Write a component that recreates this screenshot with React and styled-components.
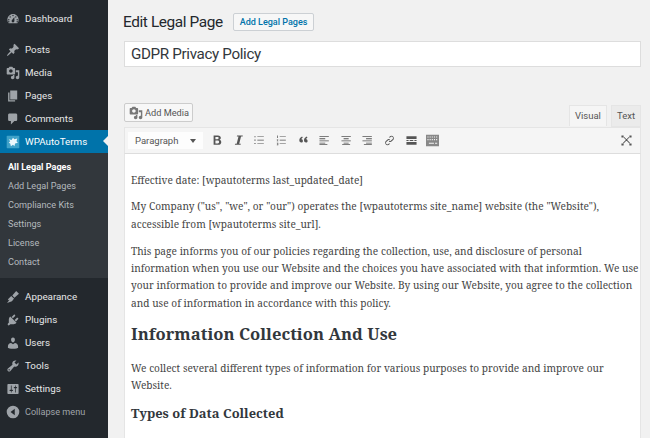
import React from 'react';
import styled, { createGlobalStyle } from 'styled-components';

const sans = 'Roboto, "Liberation Sans", sans-serif';

const Global = createGlobalStyle`
  html, body { margin: 0; padding: 0; background: #f1f1f1; }
  body { width: 650px; height: 438px; overflow: hidden; font-family: ${sans}; }
`;

const Shell = styled.div`
  display: flex;
  width: 650px;
  height: 438px;
  overflow: hidden;
`;

const Sidebar = styled.nav`
  width: 108px;
  flex: none;
  background: #23282d;
  padding-top: 7px;
`;

const MenuItem = styled.div`
  position: relative;
  display: flex;
  align-items: center;
  height: 23px;
  padding-left: 6px;
  gap: 5px;
  font-size: 9.8px;
  color: ${(p) => (p.$active ? '#fff' : '#e6e7e8')};
  background: ${(p) => (p.$active ? '#0073aa' : 'transparent')};
  margin-top: ${(p) => p.$gap || 0}px;
`;

const MenuIcon = styled.svg`
  width: 14px;
  height: 14px;
  flex: none;
  fill: ${(p) => p.$tint || '#9ea3a8'};
`;

const Arrow = styled.span`
  position: absolute;
  right: 0;
  top: 6px;
  border: 5px solid transparent;
  border-right-color: #f1f1f1;
  border-left: 0;
`;

const SubMenu = styled.div`
  background: #32373c;
  padding: 5px 0 6px;
  margin-bottom: 7px;
`;

const SubItem = styled.div`
  height: 19px;
  line-height: 19px;
  padding-left: 8px;
  font-size: 9.1px;
  font-weight: ${(p) => (p.$current ? 700 : 400)};
  color: ${(p) => (p.$current ? '#fff' : '#b4b9be')};
`;

const Collapse = styled(MenuItem)`
  color: #a0a5aa;
  font-size: 9.1px;
`;

const Main = styled.main`
  flex: 1;
  min-width: 0;
  padding: 0 9px 0 16px;
`;

const HeadingRow = styled.div`
  display: flex;
  align-items: center;
  gap: 10px;
  height: 41px;
  padding-top: 3px;
  margin-left: -1px;
  box-sizing: border-box;
`;

const Heading = styled.h1`
  margin: 0;
  font-size: 15.4px;
  letter-spacing: -0.4px;
  font-weight: 400;
  color: #23282d;
`;

const AddNew = styled.button`
  height: 18px;
  padding: 0 6px;
  border: 1px solid #ccd0d4;
  border-radius: 2px;
  background: #f7f7f7;
  color: #0073aa;
  font: 500 9px ${sans};
`;

const TitleInput = styled.div`
  height: 24px;
  line-height: 24px;
  border: 1px solid #ddd;
  background: #fff;
  padding-left: 6px;
  font-size: 15.2px;
  letter-spacing: -0.35px;
  color: #32373c;
`;

const EditorTop = styled.div`
  display: flex;
  align-items: flex-end;
  justify-content: space-between;
  margin-top: 35px;
  height: 25px;
`;

const MediaButton = styled.button`
  display: flex;
  align-items: center;
  gap: 2px;
  height: 19px;
  margin-bottom: 5px;
  padding: 0 3px 0 4px;
  border: 1px solid #ccc;
  border-radius: 2px;
  background: #f7f7f7;
  color: #555;
  font: 9.2px ${sans};
`;

const Tabs = styled.div`
  display: flex;
  gap: 4px;
`;

const Tab = styled.div`
  height: 20px;
  line-height: 20px;
  padding: 0 5px;
  font-size: 9.5px;
  color: #555;
  background: ${(p) => (p.$on ? '#f5f5f5' : '#ebebeb')};
  border: 1px solid #e5e5e5;
  border-bottom: ${(p) => (p.$on ? 'none' : '1px solid #e5e5e5')};
`;

const Toolbar = styled.div`
  display: flex;
  align-items: center;
  height: 25px;
  padding: 0 3px;
  background: #f5f5f5;
  border: 1px solid #e5e5e5;
  border-bottom: 1px solid #ddd;
`;

const Format = styled.div`
  display: flex;
  align-items: center;
  justify-content: space-between;
  width: 75px;
  height: 17px;
  padding: 0 7px;
  box-sizing: border-box;
  background: #fdfdfd;
  font-size: 9.5px;
  color: #555;
  margin-right: 3px;
`;

const Caret = styled.span`
  border: 3px solid transparent;
  border-top: 4px solid #555;
  border-bottom: 0;
`;

const ToolButton = styled.span`
  display: flex;
  align-items: center;
  justify-content: center;
  width: 21.6px;
`;

const ToolIcon = styled.svg`
  width: 13px;
  height: 13px;
  fill: ${(p) => p.$tint || '#555'};
`;

const Spacer = styled.div`
  flex: 1;
`;

const Content = styled.article`
  height: 300px;
  overflow: hidden;
  box-sizing: border-box;
  border-left: 1px solid #e5e5e5;
  border-right: 1px solid #e5e5e5;
  background: #fff;
  padding: 17.5px 1px 0 6px;
  font-family: "Noto Serif", "Liberation Serif", serif;
  font-size: 10.1px;
  word-spacing: 0.15px;
  line-height: 17.3px;
  color: #444;
`;

const Para = styled.p`
  margin: 0 0 9.7px;
`;

const H2 = styled.h2`
  margin: 9.5px 0 14px;
  font-size: 16.6px;
  line-height: 24px;
  font-weight: 700;
  color: #32373c;
`;

const H3 = styled.h3`
  margin: 9px 0 0;
  font-size: 12.9px;
  line-height: 18px;
  font-weight: 700;
  color: #32373c;
`;

const menuPaths = {
  dashboard: 'M3.76 16h12.48c1.1-1.37 1.76-3.11 1.76-5 0-4.42-3.58-8-8-8s-8 3.58-8 8c0 1.89.66 3.63 1.76 5zM10 4c.55 0 1 .45 1 1s-.45 1-1 1-1-.45-1-1 .45-1 1-1zM6 6c.55 0 1 .45 1 1s-.45 1-1 1-1-.45-1-1 .45-1 1-1zm8 0c.55 0 1 .45 1 1s-.45 1-1 1-1-.45-1-1 .45-1 1-1zm-5.37 5.55L12 7v6c0 1.1-.9 2-2 2s-2-.9-2-2c0-.57.24-1.08.63-1.45zM4 10c.55 0 1 .45 1 1s-.45 1-1 1-1-.45-1-1 .45-1 1-1zm12 0c.55 0 1 .45 1 1s-.45 1-1 1-1-.45-1-1 .45-1 1-1zm-12 3c.55 0 1 .45 1 1s-.45 1-1 1-1-.45-1-1 .45-1 1-1zm12 0c.55 0 1 .45 1 1s-.45 1-1 1-1-.45-1-1 .45-1 1-1z',
  posts: 'M10.44 3.02l1.82-1.82 6.36 6.35-1.83 1.82c-1.05-.68-2.48-.57-3.41.36l-.75.75c-.92.93-1.04 2.35-.35 3.41l-1.83 1.82-2.41-2.41-2.8 2.79c-.42.42-3.38 2.71-3.8 2.29s1.86-3.39 2.28-3.81l2.79-2.79L4.1 9.36l1.83-1.82c1.05.69 2.48.57 3.4-.36l.75-.75c.93-.92 1.05-2.35.36-3.41z',
  media: 'M13 11V4c0-.55-.45-1-1-1h-1.67L9 1H5L3.67 3H2c-.55 0-1 .45-1 1v7c0 .55.45 1 1 1h10c.55 0 1-.45 1-1zM7 4.5c1.38 0 2.5 1.12 2.5 2.5S8.38 9.5 7 9.5 4.5 8.38 4.5 7 5.62 4.5 7 4.5zM14 6h5v10.5c0 1.38-1.12 2.5-2.5 2.5S14 17.88 14 16.5s1.12-2.5 2.5-2.5c.17 0 .34.02.5.05V9h-3V6zm-4 8.05V13h2v3.5c0 1.38-1.12 2.5-2.5 2.5S7 17.88 7 16.5 8.12 14 9.5 14c.17 0 .34.02.5.05z',
  pages: 'M6 15V2h10v13H6zm-1 1h8v2H3V5h2v11z',
  comments: 'M5 2h9c1.1 0 2 .9 2 2v7c0 1.1-.9 2-2 2h-2l-5 5v-5H5c-1.1 0-2-.9-2-2V4c0-1.1.9-2 2-2z',
  appearance: 'M14.5 1.5l4 4-6.500 5.500-3-3zM7.500 8.500l4 4-1.500 1.500c-.5 1-1 2-2.500 2.500L1.500 18.500l3.500-4.500-2.500.5c.5-1.500 1.500-2.500 2.500-3.500z',
  plugins: 'M13.11 4.36L9.87 7.6 8 5.73l3.24-3.24c.35-.34 1.05-.2 1.56.32.52.51.66 1.21.31 1.55zm-8 1.77l.91-1.12 9.01 9.01-1.19.84c-.71.71-2.58 1.16-3.82 1.16H6.14L4.9 17.26c-.59.59-1.54.59-2.12 0-.59-.58-.59-1.53 0-2.12l1.24-1.24v-3.88c0-1.13.4-3.05 1.09-3.89zm7.26 3.97l3.24-3.24c.34-.35 1.04-.21 1.55.31.52.51.66 1.21.31 1.55l-3.24 3.25z',
  users: 'M10 9.25c-2.27 0-2.73-3.44-2.73-3.44C7 4.02 7.82 2 9.97 2c2.16 0 2.98 2.02 2.71 3.81 0 0-.41 3.44-2.68 3.44zm0 2.57L12.72 10c2.39 0 4.52 2.33 4.52 4.53v2.49s-3.65 1.13-7.24 1.13c-3.65 0-7.24-1.13-7.24-1.13v-2.49c0-2.25 1.94-4.48 4.47-4.48z',
  tools: 'M16.68 9.77c-1.34 1.34-3.3 1.67-4.95.99l-5.41 6.52c-.99.99-2.59.99-3.58 0s-.99-2.59 0-3.57l6.52-5.42c-.68-1.65-.35-3.61.99-4.95 1.28-1.28 3.12-1.62 4.72-1.06l-2.89 2.89 2.82 2.82 2.86-2.87c.53 1.58.18 3.41-1.08 4.67zM3.81 16.21c.4.39 1.04.39 1.43 0 .4-.4.4-1.04 0-1.43-.39-.4-1.03-.4-1.43 0-.39.39-.39 1.03 0 1.43z',
  settings: 'M18 16V4c0-.55-.45-1-1-1H3c-.55 0-1 .45-1 1v12c0 .55.45 1 1 1h14c.55 0 1-.45 1-1zM8 11h1c.55 0 1 .45 1 1s-.45 1-1 1H8v1.5c0 .28-.22.5-.5.5s-.5-.22-.5-.5V13H6c-.55 0-1-.45-1-1s.45-1 1-1h1V5.5c0-.28.22-.5.5-.5s.5.22.5.5V11zm5-2h-1c-.55 0-1-.45-1-1s.45-1 1-1h1V5.5c0-.28.22-.5.5-.5s.5.22.5.5V7h1c.55 0 1 .45 1 1s-.45 1-1 1h-1v5.5c0 .28-.22.5-.5.5s-.5-.22-.5-.5V9z',
  collapse: 'M10 1a9 9 0 1 1 0 18 9 9 0 0 1 0-18zm2.500 4.500L6.500 10l6 4.500z',
};

const toolPaths = {
  bold: 'M5 2h6c2.500 0 4 1.300 4 3.300 0 1.400-.8 2.400-2 2.800 1.600.3 2.600 1.500 2.600 3.200 0 2.300-1.700 3.700-4.400 3.700H5zm2.500 2v3.100h2.900c1 0 1.600-.6 1.600-1.600S11.400 4 10.400 4zm0 5v4h3.200c1.200 0 1.900-.8 1.900-2s-.7-2-1.900-2z',
  italic: 'M7 2h8l-.3 1.500H12.500L10 13.500h2.200L11.900 15H4l.3-1.500h2.200L9 3.500H6.700z',
  ul: 'M2 3h1.500v1.500H2zM6 3.300h9v.9H6zM2 7.700h1.500v1.500H2zM6 8h9v.9H6zM2 12.400h1.500v1.500H2zM6 12.700h9v.9H6z',
  ol: 'M3 2h1v3.500H3zM2.500 7.500h2v.8l-1.200 1h1.200v.7h-2v-.8l1.200-1H2.500zM2.500 12h2v3.500h-2v-.7h1.200v-.7h-1v-.6h1v-.7H2.500zM6.500 3.300h8.500v.9H6.500zM6.500 8h8.500v.9H6.500zM6.500 12.700h8.500v.9H6.500z',
  quote: 'M7 3.500l1 1.300C6.700 5.700 6 6.500 6 7.300c.9 0 2.200.6 2.200 2.300 0 1.300-1 2.200-2.200 2.200-1.500 0-2.800-1.100-2.800-3.100 0-2.300 1.600-4 3.800-5.200zm6.500 0l1 1.300c-1.300.9-2 1.700-2 2.500.9 0 2.200.6 2.200 2.300 0 1.300-1 2.200-2.200 2.200-1.500 0-2.800-1.100-2.800-3.100 0-2.300 1.600-4 3.800-5.200z',
  alignLeft: 'M2 3h13v1.200H2zM2 6h8v1.200H2zM2 9h13v1.200H2zM2 12h8v1.200H2zM2 14.300h11v1H2z',
  alignCenter: 'M2 3h13v1.200H2zM5 6h7v1.200H5zM2 9h13v1.200H2zM5 12h7v1.200H5zM3 14.300h11v1H3z',
  alignRight: 'M2 3h13v1.200H2zM7 6h8v1.200H7zM2 9h13v1.200H2zM7 12h8v1.200H7zM4 14.300h11v1H4z',
  link: 'M11.500 2.500a3.500 3.500 0 0 1 3 5.300l-2 2a3.500 3.500 0 0 1-4.500.5l1-1a2 2 0 0 0 2.500-.5l2-2a2 2 0 0 0-2.800-2.800l-1 1a4.500 4.500 0 0 0-1.700-.1l1.700-1.700a3.500 3.500 0 0 1 1.800-.7zM6.500 15.500a3.500 3.500 0 0 1-3-5.300l2-2a3.500 3.500 0 0 1 4.500-.5l-1 1a2 2 0 0 0-2.500.5l-2 2a2 2 0 0 0 2.800 2.800l1-1a4.500 4.500 0 0 0 1.700.1l-1.700 1.700a3.500 3.500 0 0 1-1.800.7z',
  more: 'M2 3h14v4H2zM2 8.200h3v1.500H2zM6.500 8.200h5v1.500h-5zM13 8.200h3v1.500h-3zM2 11h14v4H2z',
  keyboard: 'M0 1h18v16H0zM2 3.500v1.500h1.500V3.500zM5 3.500v1.500h1.500V3.500zM8 3.500v1.500h1.500V3.500zM11 3.500v1.500h1.500V3.500zM14 3.500v1.500h1.500V3.500zM2 7v1.500h1.500V7zM5 7v1.500h1.500V7zM8 7v1.500h1.500V7zM11 7v1.500h1.500V7zM14 7v1.500h1.500V7zM4 12v1.500h7V12zM12.500 12v1.500h3V12z',
  fullscreen: 'M2 2h3v3H2zM13 2h3v3h-3zM2 13h3v3H2zM13 13h3v3h-3zM5 5l8 8 .8-.8-8-8zM13 5l-8 8-.8-.8 8-8z',
};

const Icon = ({ name, tint }) => (
  <MenuIcon viewBox="0 0 20 20" aria-hidden="true" $tint={tint}>
    <path fillRule="evenodd" d={menuPaths[name]} />
  </MenuIcon>
);

const TermsLogo = () => (
  <MenuIcon viewBox="0 0 20 20" aria-hidden="true" $tint="#3fa2c9">
    <rect x="1" y="1" width="18" height="18" rx="1" />
    <path fill="#eef8fc" d="M4 6l4 1 2-3 2 2 4-1-1 4 2 2-4 1-1 4-2-2-3 2-1-4-2-1 2-2z" />
  </MenuIcon>
);

const Tool = ({ name, tint }) => (
  <ToolButton>
    <ToolIcon viewBox="0 0 18 18" aria-hidden="true" $tint={tint}>
      <path fillRule="evenodd" d={toolPaths[name]} />
    </ToolIcon>
  </ToolButton>
);

const App = () => (
  <Shell>
    <Global />
    <Sidebar>
      <MenuItem><Icon name="dashboard" />Dashboard</MenuItem>
      <MenuItem $gap={8}><Icon name="posts" />Posts</MenuItem>
      <MenuItem><Icon name="media" />Media</MenuItem>
      <MenuItem><Icon name="pages" />Pages</MenuItem>
      <MenuItem><Icon name="comments" />Comments</MenuItem>
      <MenuItem $active><TermsLogo />WPAutoTerms<Arrow /></MenuItem>
      <SubMenu>
        <SubItem $current>All Legal Pages</SubItem>
        <SubItem>Add Legal Pages</SubItem>
        <SubItem>Compliance Kits</SubItem>
        <SubItem>Settings</SubItem>
        <SubItem>License</SubItem>
        <SubItem>Contact</SubItem>
      </SubMenu>
      <MenuItem><Icon name="appearance" />Appearance</MenuItem>
      <MenuItem><Icon name="plugins" />Plugins</MenuItem>
      <MenuItem><Icon name="users" />Users</MenuItem>
      <MenuItem><Icon name="tools" />Tools</MenuItem>
      <MenuItem><Icon name="settings" />Settings</MenuItem>
      <Collapse><Icon name="collapse" />Collapse menu</Collapse>
    </Sidebar>
    <Main>
      <HeadingRow>
        <Heading>Edit Legal Page</Heading>
        <AddNew>Add Legal Pages</AddNew>
      </HeadingRow>
      <TitleInput>GDPR Privacy Policy</TitleInput>
      <EditorTop>
        <MediaButton><Icon name="media" tint="#777" />Add Media</MediaButton>
        <Tabs>
          <Tab $on>Visual</Tab>
          <Tab>Text</Tab>
        </Tabs>
      </EditorTop>
      <Toolbar>
        <Format>Paragraph<Caret /></Format>
        <Tool name="bold" />
        <Tool name="italic" />
        <Tool name="ul" />
        <Tool name="ol" />
        <Tool name="quote" />
        <Tool name="alignLeft" />
        <Tool name="alignCenter" />
        <Tool name="alignRight" />
        <Tool name="link" />
        <Tool name="more" />
        <Tool name="keyboard" tint="#888" />
        <Spacer />
        <Tool name="fullscreen" />
      </Toolbar>
      <Content>
        <Para>Effective date: [wpautoterms last_updated_date]</Para>
        <Para>My Company ("us", "we", or "our") operates the [wpautoterms site_name] website (the "Website"), accessible from [wpautoterms site_url].</Para>
        <Para>This page informs you of our policies regarding the collection, use, and disclosure of personal information when you use our Website and the choices you have associated with that informtion. We use your information to provide and improve our Website. By using our Website, you agree to the collection and use of information in accordance with this policy.</Para>
        <H2>Information Collection And Use</H2>
        <Para>We collect several different types of information for various purposes to provide and improve our Website.</Para>
        <H3>Types of Data Collected</H3>
      </Content>
    </Main>
  </Shell>
);

export default App;
